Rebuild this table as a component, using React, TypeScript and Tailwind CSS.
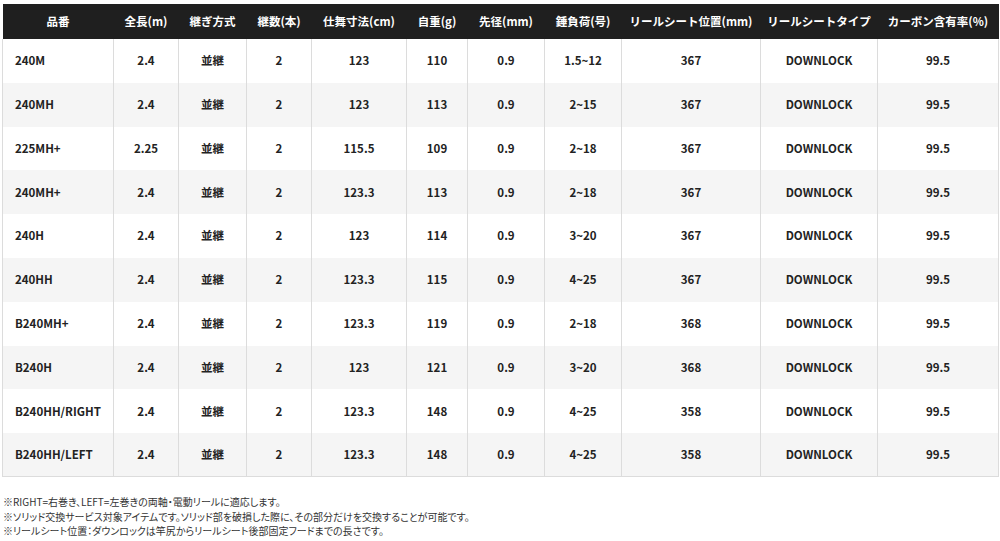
const headers = [
  "品番",
  "全長(m)",
  "継ぎ方式",
  "継数(本)",
  "仕舞寸法(cm)",
  "自重(g)",
  "先径(mm)",
  "錘負荷(号)",
  "リールシート位置(mm)",
  "リールシートタイプ",
  "カーボン含有率(%)",
];

const widths = [111, 65, 68, 65, 95, 61, 77, 77, 139, 117, 121];

const rows: string[][] = [
  ["240M", "2.4", "並継", "2", "123", "110", "0.9", "1.5~12", "367", "DOWNLOCK", "99.5"],
  ["240MH", "2.4", "並継", "2", "123", "113", "0.9", "2~15", "367", "DOWNLOCK", "99.5"],
  ["225MH+", "2.25", "並継", "2", "115.5", "109", "0.9", "2~18", "367", "DOWNLOCK", "99.5"],
  ["240MH+", "2.4", "並継", "2", "123.3", "113", "0.9", "2~18", "367", "DOWNLOCK", "99.5"],
  ["240H", "2.4", "並継", "2", "123", "114", "0.9", "3~20", "367", "DOWNLOCK", "99.5"],
  ["240HH", "2.4", "並継", "2", "123.3", "115", "0.9", "4~25", "367", "DOWNLOCK", "99.5"],
  ["B240MH+", "2.4", "並継", "2", "123.3", "119", "0.9", "2~18", "368", "DOWNLOCK", "99.5"],
  ["B240H", "2.4", "並継", "2", "123", "121", "0.9", "3~20", "368", "DOWNLOCK", "99.5"],
  ["B240HH/RIGHT", "2.4", "並継", "2", "123.3", "148", "0.9", "4~25", "358", "DOWNLOCK", "99.5"],
  ["B240HH/LEFT", "2.4", "並継", "2", "123.3", "148", "0.9", "4~25", "358", "DOWNLOCK", "99.5"],
];

const notes = [
  "※RIGHT=右巻き、LEFT=左巻きの両軸・電動リールに適応します。",
  "※ソリッド交換サービス対象アイテムです。ソリッド部を破損した際に、その部分だけを交換することが可能です。",
  "※リールシート位置：ダウンロックは竿尻からリールシート後部固定フードまでの長さです。",
];

export default function App() {
  return (
    <div className="min-h-[541px] bg-white pl-[2px] pt-[4px] font-['Noto_Sans_CJK_JP','Noto_Sans',sans-serif] text-[#222]">
      <table className="w-[996px] table-fixed border-collapse">
        <colgroup>
          {widths.map((w, i) => (
            <col key={i} style={{ width: w }} />
          ))}
        </colgroup>
        <thead>
          <tr className="h-[35px] bg-[#1f1f1f] text-white">
            {headers.map((h) => (
              <th key={h} className="px-1 text-center text-[11.5px] font-bold whitespace-nowrap">
                {h}
              </th>
            ))}
          </tr>
        </thead>
        <tbody>
          {rows.map((row, r) => (
            <tr
              key={row[0]}
              className={`h-[43.8px] ${r % 2 === 1 ? "bg-[#f5f5f5]" : "bg-white"}`}
            >
              {row.map((cell, c) => (
                <td
                  key={c}
                  className={`border-x border-[#dcdcdc] text-[11.5px] font-bold ${
                    c === 0 ? "pl-[12px] text-left" : "text-center"
                  } ${r === rows.length - 1 ? "border-b" : ""}`}
                >
                  {cell}
                </td>
              ))}
            </tr>
          ))}
        </tbody>
      </table>
      <div className="mt-[18px] pl-[1px] text-[10px] leading-[14.5px] text-[#333] [font-feature-settings:'palt']">
        {notes.map((n) => (
          <p key={n}>{n}</p>
        ))}
      </div>
    </div>
  );
}
